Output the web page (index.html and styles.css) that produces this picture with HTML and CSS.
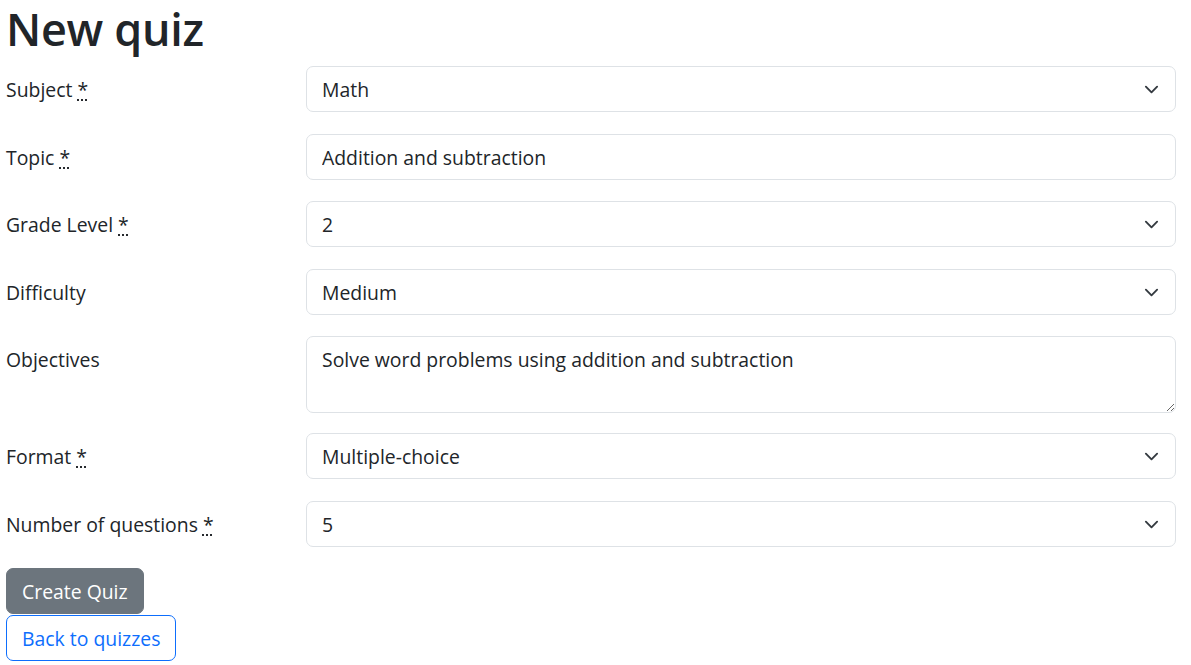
FILE: index.html
```html
<!DOCTYPE html>
<html lang="en">
<head>
<meta charset="utf-8">
<title>New quiz</title>
<link rel="stylesheet" href="styles.css">
</head>
<body>
<main class="page">
  <h1 class="title">New quiz</h1>
  <form class="quiz-form">
    <div class="field">
      <label class="field-label">Subject <abbr class="req" title="required">*</abbr></label>
      <div class="select-wrap">
        <select class="control select"><option>Math</option></select>
        <svg class="chevron" viewBox="0 0 16 16" width="19" height="15"><path d="m2 5 6 6 6-6" fill="none" stroke="#343a40" stroke-width="2" stroke-linecap="round" stroke-linejoin="round"/></svg>
      </div>
    </div>
    <div class="field">
      <label class="field-label">Topic <abbr class="req" title="required">*</abbr></label>
      <input class="control" type="text" value="Addition and subtraction">
    </div>
    <div class="field">
      <label class="field-label">Grade Level <abbr class="req" title="required">*</abbr></label>
      <div class="select-wrap">
        <select class="control select"><option>2</option></select>
        <svg class="chevron" viewBox="0 0 16 16" width="19" height="15"><path d="m2 5 6 6 6-6" fill="none" stroke="#343a40" stroke-width="2" stroke-linecap="round" stroke-linejoin="round"/></svg>
      </div>
    </div>
    <div class="field">
      <label class="field-label">Difficulty</label>
      <div class="select-wrap">
        <select class="control select"><option>Medium</option></select>
        <svg class="chevron" viewBox="0 0 16 16" width="19" height="15"><path d="m2 5 6 6 6-6" fill="none" stroke="#343a40" stroke-width="2" stroke-linecap="round" stroke-linejoin="round"/></svg>
      </div>
    </div>
    <div class="field field-tall">
      <label class="field-label">Objectives</label>
      <textarea class="control textarea">Solve word problems using addition and subtraction</textarea>
    </div>
    <div class="field">
      <label class="field-label">Format <abbr class="req" title="required">*</abbr></label>
      <div class="select-wrap">
        <select class="control select"><option>Multiple-choice</option></select>
        <svg class="chevron" viewBox="0 0 16 16" width="19" height="15"><path d="m2 5 6 6 6-6" fill="none" stroke="#343a40" stroke-width="2" stroke-linecap="round" stroke-linejoin="round"/></svg>
      </div>
    </div>
    <div class="field">
      <label class="field-label">Number of questions <abbr class="req" title="required">*</abbr></label>
      <div class="select-wrap">
        <select class="control select"><option>5</option></select>
        <svg class="chevron" viewBox="0 0 16 16" width="19" height="15"><path d="m2 5 6 6 6-6" fill="none" stroke="#343a40" stroke-width="2" stroke-linecap="round" stroke-linejoin="round"/></svg>
      </div>
    </div>
    <div class="actions">
      <button type="button" class="btn btn-secondary">Create Quiz</button>
    </div>
  </form>
  <a class="btn btn-outline" href="#">Back to quizzes</a>
</main>
</body>
</html>
```
FILE: styles.css
```css
* { box-sizing: border-box; }
html, body { margin: 0; padding: 0; }
body {
  font-family: "Open Sans", "Noto Sans", sans-serif;
  font-size: 19.4px;
  line-height: 28px;
  color: #212529;
  background: #fff;
}
.page {
  padding: 0 15px 0 6px;
}
.title {
  margin: 0 0 9px 0;
  font-size: 45px;
  line-height: 57px;
  font-weight: 600;
  letter-spacing: -0.3px;
}
.quiz-form {
  display: flex;
  flex-direction: column;
}
.field {
  display: grid;
  grid-template-columns: 300px 1fr;
  align-items: start;
  margin-bottom: 21.5px;
}
.field-tall {
  margin-bottom: 20px;
}
.field-label {
  padding-top: 10px;
  line-height: 28px;
}
.req {
  text-decoration: underline dotted;
  text-underline-offset: 3px;
  cursor: help;
}
.select-wrap {
  position: relative;
}
.control {
  display: block;
  width: 100%;
  height: 46px;
  padding: 9px 15px 7px;
  font: inherit;
  line-height: 28px;
  color: #212529;
  background: #fff;
  border: 1px solid #dee2e6;
  border-radius: 7px;
  appearance: none;
  -webkit-appearance: none;
  outline: none;
}
.select {
  padding-right: 48px;
}
.chevron {
  position: absolute;
  right: 15px;
  top: 16px;
  pointer-events: none;
}
.textarea {
  height: 77px;
  resize: vertical;
}
.actions {
  display: flex;
}
.btn {
  display: inline-block;
  height: 46px;
  padding: 9px 15px 7px;
  font: inherit;
  line-height: 28px;
  border-radius: 7px;
  text-decoration: none;
  cursor: pointer;
}
.btn-secondary {
  color: #fff;
  background: #6c757d;
  border: 1px solid #6c757d;
}
.btn-outline {
  margin-top: 1px;
  color: #0d6efd;
  background: #fff;
  border: 1px solid #0d6efd;
}
```
